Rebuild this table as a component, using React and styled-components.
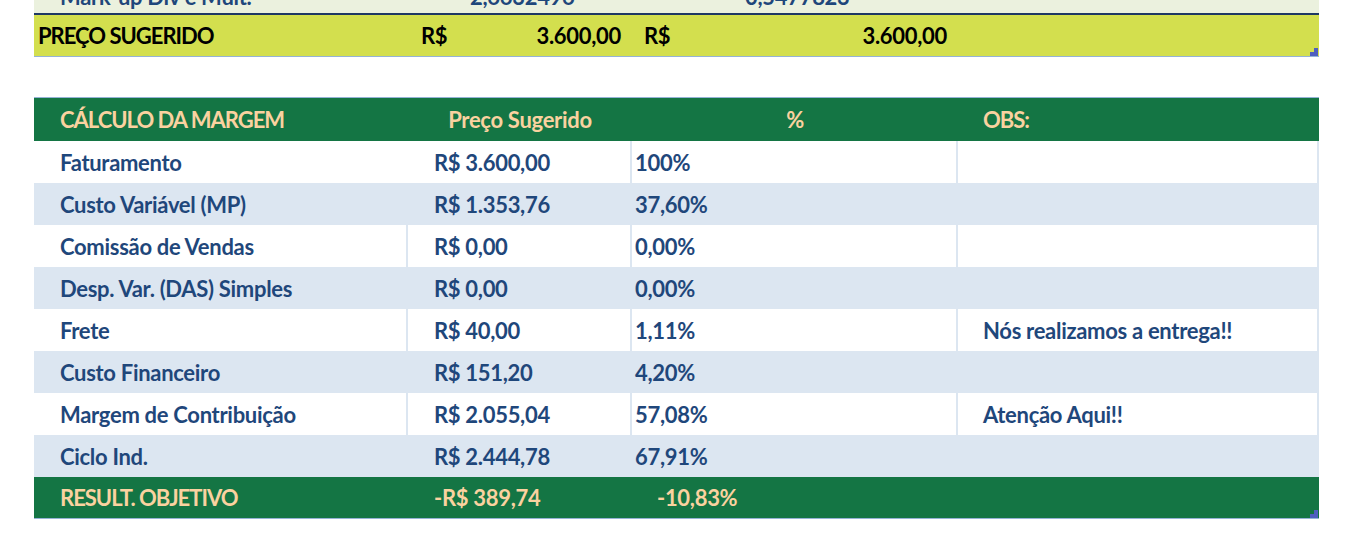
import React from "react";
import styled, { createGlobalStyle } from "styled-components";

const GlobalStyle = createGlobalStyle`
  html, body { margin: 0; padding: 0; background: #ffffff; }
  body { font-family: Lato, "Liberation Sans", sans-serif; }
`;

const COLS = "374px 224px 326px 361px";
const NAVY = "#1F477B";
const LINE = "#DCE6F1";
const GREEN = "#147544";
const PEACH = "#FAD2A0";

const Page = styled.div`
  padding-left: 34px;
  width: 1285px;
  font-family: Lato, "Liberation Sans", sans-serif;
  font-weight: 700;
  font-size: 22px;
  letter-spacing: -0.3px;
`;

const Caps = styled.span`
  letter-spacing: -1px;
`;

const TopRow = styled.div`
  display: grid;
  grid-template-columns: ${COLS};
  grid-template-rows: 13px;
  height: 13px;
  overflow: hidden;
  background: #EBF1DE;
  border-bottom: 2px solid #1F3864;
  align-items: end;
  color: ${NAVY};
`;

const TopCell = styled.div`
  line-height: 20px;
  padding-bottom: 6px;
  padding-left: ${(p) => p.$pl || 0}px;
  white-space: nowrap;
`;

const PriceRow = styled.div`
  position: relative;
  display: grid;
  grid-template-columns: ${COLS};
  height: 41px;
  background: #D3DF4E;
  border-bottom: 1px solid #95B3D7;
  align-items: center;
  color: #000;
`;

const PriceLabel = styled.div`
  padding-left: 4px;
`;

const MoneyCell = styled.div`
  display: flex;
  justify-content: space-between;
  padding-left: ${(p) => p.$pl}px;
  padding-right: ${(p) => p.$pr}px;
`;

const Handle = styled.span`
  position: absolute;
  right: 1px;
  bottom: 0;
  width: 8px;
  height: 8px;
  background: linear-gradient(#4F5FBF, #4F5FBF) right top / 4px 4px no-repeat,
    linear-gradient(#4F5FBF, #4F5FBF) left bottom / 8px 4px no-repeat;
`;

const Gap = styled.div`
  height: 40px;
`;

const Table = styled.div`
  border-top: 1px solid #95B3D7;
  border-bottom: 1px solid #95B3D7;
  position: relative;
`;

const Row = styled.div`
  display: grid;
  grid-template-columns: ${COLS};
  height: ${(p) => p.$h || 42}px;
  background: ${(p) => (p.$kind === "green" ? GREEN : p.$kind === "blue" ? LINE : "#ffffff")};
  color: ${(p) => (p.$kind === "green" ? PEACH : NAVY)};
`;

const Cell = styled.div`
  box-sizing: border-box;
  display: flex;
  align-items: center;
  justify-content: ${(p) => (p.$center ? "center" : "flex-start")};
  padding-left: ${(p) => (p.$center ? 0 : p.$pl ?? 26)}px;
  border-right: ${(p) => (p.$line ? `2px solid ${LINE}` : "none")};
  white-space: nowrap;
`;

const rows = [
  { label: "Faturamento", value: "R$ 3.600,00", pct: "100%", obs: "", noFirstLine: true },
  { label: "Custo Variável (MP)", value: "R$ 1.353,76", pct: "37,60%", obs: "" },
  { label: "Comissão de Vendas", value: "R$ 0,00", pct: "0,00%", obs: "" },
  { label: "Desp. Var. (DAS) Simples", value: "R$ 0,00", pct: "0,00%", obs: "" },
  { label: "Frete", value: "R$ 40,00", pct: "1,11%", obs: "Nós realizamos a entrega!!" },
  { label: "Custo Financeiro", value: "R$ 151,20", pct: "4,20%", obs: "" },
  { label: "Margem de Contribuição", value: "R$ 2.055,04", pct: "57,08%", obs: "Atenção Aqui!!" },
  { label: "Ciclo Ind.", value: "R$ 2.444,78", pct: "67,91%", obs: "" },
];

export default function App() {
  return (
    <>
      <GlobalStyle />
      <Page>
        <TopRow>
          <TopCell $pl={26}>Mark-up Div e Mult.</TopCell>
          <TopCell $pl={62}>2,6632496</TopCell>
          <TopCell $pl={113}>0,5477823</TopCell>
          <TopCell />
        </TopRow>
        <PriceRow>
          <PriceLabel>
            <Caps>PREÇO SUGERIDO</Caps>
          </PriceLabel>
          <MoneyCell $pl={13} $pr={11}>
            <span>R$</span>
            <span>3.600,00</span>
          </MoneyCell>
          <MoneyCell $pl={12} $pr={11}>
            <span>R$</span>
            <span>3.600,00</span>
          </MoneyCell>
          <div />
          <Handle />
        </PriceRow>
        <Gap />
        <Table>
          <Row $kind="green" $h={43}>
            <Cell>
              <Caps>CÁLCULO DA MARGEM</Caps>
            </Cell>
            <Cell $center>Preço Sugerido</Cell>
            <Cell $center>%</Cell>
            <Cell $pl={25}>
              <Caps>OBS:</Caps>
            </Cell>
          </Row>
          {rows.map((r, i) => {
            const white = i % 2 === 0;
            return (
              <Row key={r.label} $kind={white ? "white" : "blue"}>
                <Cell $line={white && !r.noFirstLine}>{r.label}</Cell>
                <Cell $line={white}>{r.value}</Cell>
                <Cell $line={white} $pl={3}>{r.pct}</Cell>
                <Cell $line={white} $pl={25}>{r.obs}</Cell>
              </Row>
            );
          })}
          <Row $kind="green" $h={41}>
            <Cell>
              <Caps>RESULT. OBJETIVO</Caps>
            </Cell>
            <Cell>-R$ 389,74</Cell>
            <Cell $pl={25}>-10,83%</Cell>
            <Cell />
          </Row>
          <Handle />
        </Table>
      </Page>
    </>
  );
}
